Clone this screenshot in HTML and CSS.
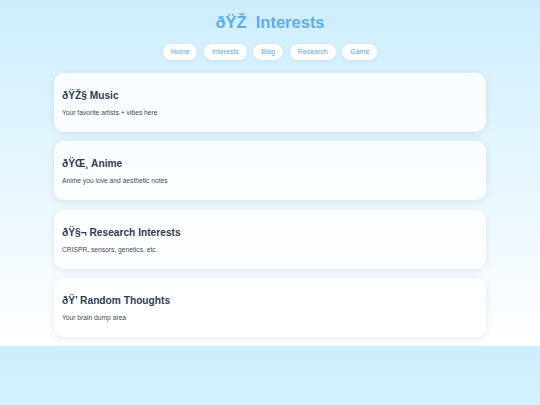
FILE: index.html
```html
<!DOCTYPE html>
<html>
<head>
<meta charset="utf-8">
<title>Interests</title>
<link rel="stylesheet" href="styles.css">
</head>
<body>
<h1 class="title">ðŸŽ&nbsp; Interests</h1>
<nav class="nav">
  <a class="pill" href="#">Home</a>
  <a class="pill" href="#">Interests</a>
  <a class="pill" href="#">Blog</a>
  <a class="pill" href="#">Research</a>
  <a class="pill" href="#">Game</a>
</nav>
<main class="cards">
  <section class="card">
    <h2 class="card-title">ðŸŽ§ Music</h2>
    <p class="card-text">Your favorite artists + vibes here</p>
  </section>
  <section class="card">
    <h2 class="card-title">ðŸŒ¸ Anime</h2>
    <p class="card-text">Anime you love and aesthetic notes</p>
  </section>
  <section class="card">
    <h2 class="card-title">ðŸ§¬ Research Interests</h2>
    <p class="card-text">CRISPR, sensors, genetics, etc.</p>
  </section>
  <section class="card">
    <h2 class="card-title">ðŸ’&shy; Random Thoughts</h2>
    <p class="card-text">Your brain dump area</p>
  </section>
</main>
</body>
</html>
```
FILE: styles.css
```css
body {
  margin: 0;
  padding: 12.5px 0 9px;
  font-family: "Liberation Sans", Arial, sans-serif;
  background: linear-gradient(to bottom, #cdeefd, #ffffff);
}

.title {
  margin: 0;
  text-align: center;
  font-size: 16.5px;
  line-height: 19px;
  font-weight: bold;
  color: #5eaee8;
}

.nav {
  margin-top: 12.5px;
  display: flex;
  justify-content: center;
  gap: 6.5px;
}

.pill {
  display: block;
  height: 16px;
  line-height: 16px;
  padding: 0 8px;
  font-size: 7px;
  color: #5aa8e2;
  text-decoration: none;
  background: #ffffff;
  border-radius: 9px;
  box-shadow: 0 1px 4px rgba(0, 0, 0, 0.07);
}

.cards {
  width: 80%;
  margin: 13px auto 0;
  display: flex;
  flex-direction: column;
  gap: 9.3px;
}

.card {
  padding: 17px 8px 15px;
  background: rgba(255, 255, 255, 0.8);
  border-radius: 10px;
  box-shadow: 0 2px 8px rgba(0, 0, 0, 0.08);
}

.card-title {
  margin: 0 0 7px;
  font-size: 10.2px;
  line-height: 12px;
  font-weight: bold;
  color: #2f3d50;
}

.card-text {
  margin: 0;
  font-size: 6.7px;
  line-height: 8px;
  color: #434b59;
}
```
